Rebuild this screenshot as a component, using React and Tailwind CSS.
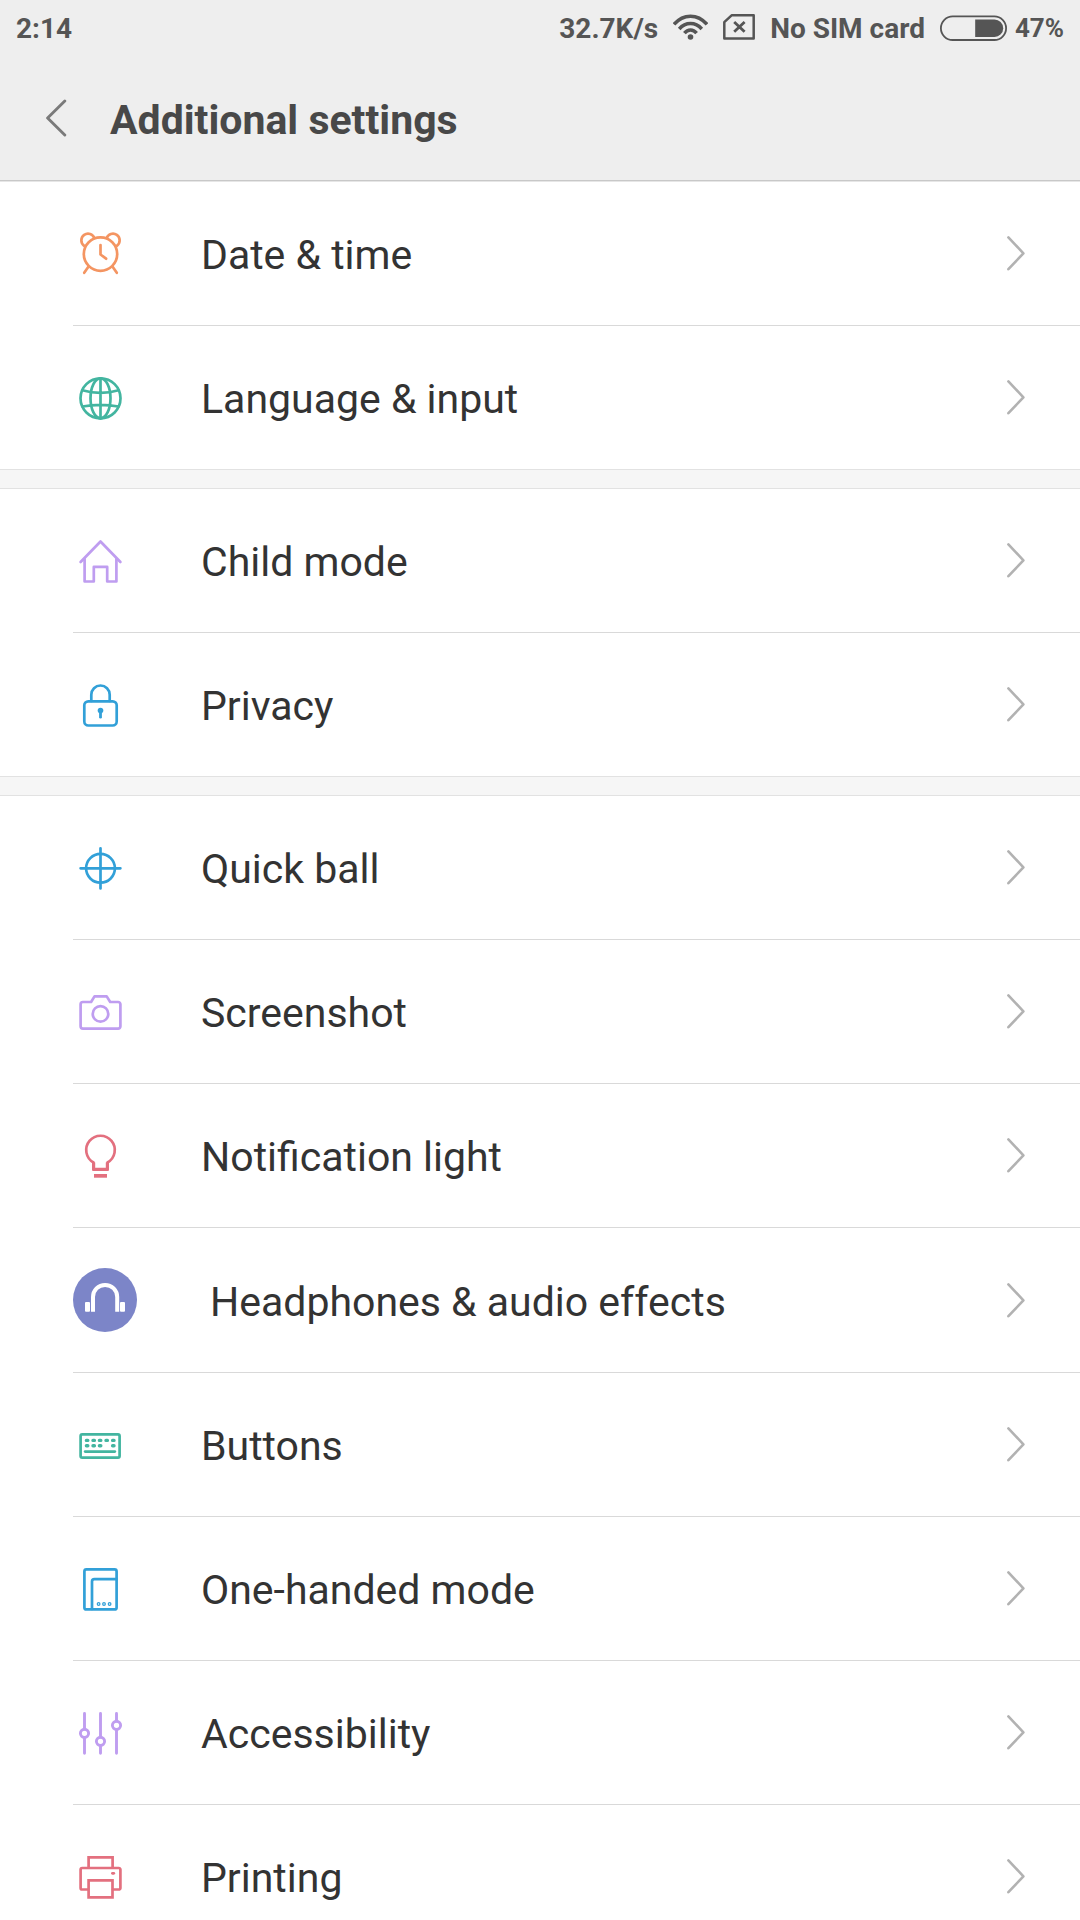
const groups = [
  [
    { label: 'Date & time', Icon: ClockIcon },
    { label: 'Language & input', Icon: GlobeIcon },
  ],
  [
    { label: 'Child mode', Icon: HomeIcon },
    { label: 'Privacy', Icon: LockIcon },
  ],
  [
    { label: 'Quick ball', Icon: TargetIcon },
    { label: 'Screenshot', Icon: CameraIcon },
    { label: 'Notification light', Icon: BulbIcon },
    { label: 'Headphones & audio effects', Icon: HeadphonesIcon },
    { label: 'Buttons', Icon: KeyboardIcon },
    { label: 'One-handed mode', Icon: OneHandedIcon },
    { label: 'Accessibility', Icon: SlidersIcon },
    { label: 'Printing', Icon: PrinterIcon },
  ],
];

export default function App() {
  return (
    <div className="flex flex-col h-screen overflow-hidden bg-white font-[Roboto,sans-serif]">
      <header className="flex-shrink-0 bg-[#eeeeee] border-b border-[#c8c8c8]">
        <StatusBar />
        <div className="flex items-center h-31 pl-[45px] gap-[43px]">
          <button type="button" aria-label="Back" className="flex-shrink-0">
            <svg width="22" height="38" viewBox="0 0 22 38" fill="none" stroke="#7a7a7a" strokeWidth="2.9" strokeLinecap="round" strokeLinejoin="round">
              <path d="M19.8 2 2.6 19l17.2 17" />
            </svg>
          </button>
          <h1 className="pt-[3px] text-[41px] leading-[60px] font-bold text-[#484848]">Additional settings</h1>
        </div>
      </header>

      <main className="flex-1 min-h-0 border-t border-[#e6e6e6] overflow-y-auto [scrollbar-width:none]">
        {groups.map((items, i) => (
          <section key={i}>
            {i > 0 && <div className="h-5 bg-[#f6f6f6] border-y border-[#e2e2e2]" />}
            <ul className="pl-[73px] divide-y divide-[#d9d9d9]">
              {items.map((item) => (
                <SettingRow key={item.label} {...item} />
              ))}
            </ul>
          </section>
        ))}
      </main>
    </div>
  );
}

function SettingRow({ label, Icon }) {
  return (
    <li>
      <a href="#" className="flex items-center gap-[73px] py-10 pr-[55px]">
        <Icon />
        <span className="flex-1 min-w-0 pt-[3px] text-[41px] leading-[60px] text-[#333333]">{label}</span>
        <svg className="flex-shrink-0" width="18" height="35" viewBox="0 0 18 35" fill="none" stroke="#b2b2b2" strokeWidth="2.6" strokeLinecap="round" strokeLinejoin="round">
          <path d="M1.4 1.4 16.4 17.3 1.4 33.2" />
        </svg>
      </a>
    </li>
  );
}

/* ── Status bar ── */
function StatusBar() {
  return (
    <div className="flex items-center justify-between h-14 px-4 text-[28px] font-bold text-[#555555]">
      <span className="pt-px">2:14</span>
      <div className="flex items-center gap-[15px]">
        <span className="pt-px">32.7K/s</span>
        <svg width="35" height="28" viewBox="0 0 35 28" fill="none" stroke="currentColor" strokeWidth="3.5">
          <path d="M1 10.4C10.2-.6 24.8-.6 34 10.4" />
          <path d="M6.2 15c6.4-7.2 16.2-7.2 22.6 0" />
          <path d="M11.4 19.2c3.4-4.2 8.8-4.2 12.2 0" />
          <circle cx="17.5" cy="23" r="2.8" fill="currentColor" stroke="none" />
        </svg>
        <svg width="32" height="28" viewBox="0 0 32 28" fill="none" stroke="currentColor" strokeWidth="2.5" strokeLinejoin="round">
          <path d="M8.6 1.3H30.7V24.6H1.3V8.2Z" />
          <path d="m11.2 8 10.4 9.8m0-9.8L11.2 17.8" strokeWidth="2.8" />
        </svg>
        <span className="pt-px">No SIM card</span>
        <div className="flex items-center gap-2">
          <svg width="67" height="26" viewBox="0 0 67 26">
            <rect x="0.9" y="1.4" width="65.2" height="23.6" rx="11.8" fill="none" stroke="currentColor" strokeWidth="1.8" />
            <path d="M35.2 4.5H54.5a8.7 8.7 0 0 1 0 17.4H35.2Z" fill="currentColor" />
          </svg>
          <span className="pt-px text-[26px]">47%</span>
        </div>
      </div>
    </div>
  );
}

/* ── Row icons ── */
function LineIcon({ color, children }) {
  return (
    <svg className="flex-shrink-0" width="55" height="55" viewBox="0 0 55 55" fill="none" stroke={color} strokeWidth="2.7" strokeLinecap="round" strokeLinejoin="round">
      {children}
    </svg>
  );
}

function ClockIcon() {
  return (
    <LineIcon color="#f49562">
      <circle cx="27.5" cy="28.1" r="16.7" />
      <path d="M27.5 19.1v9.4l5.6 4.2" />
      <path d="M10.9 19.6A6.7 6.7 0 1 1 21.4 12.2" />
      <path d="M44.1 19.6A6.7 6.7 0 1 0 33.6 12.2" />
      <path d="M15.2 41 11.2 46.8M39.8 41 43.8 46.8" />
    </LineIcon>
  );
}

function GlobeIcon() {
  return (
    <LineIcon color="#43b5a0">
      <circle cx="27.5" cy="28.3" r="20" />
      <ellipse cx="27.5" cy="28.3" rx="10" ry="20" />
      <path d="M27.5 8.3v40M9.3 20.3q18.2 5.2 36.4 0M9.3 36.5q18.2-3.4 36.4 0" />
    </LineIcon>
  );
}

function HomeIcon() {
  return (
    <LineIcon color="#bf9df0">
      <path d="M7.6 29 27.5 8.5 47.4 29" />
      <path d="M11.6 26v22.5h9.2V33.9h13.4v14.6h9.2V26" />
    </LineIcon>
  );
}

function LockIcon() {
  return (
    <LineIcon color="#32a0d8">
      <rect x="11.3" y="24.3" width="32.4" height="24.2" rx="4" />
      <path d="M18.3 24v-6.3a9.2 9.2 0 0 1 18.4 0V24" />
      <circle cx="27.5" cy="33.6" r="2.8" fill="#32a0d8" stroke="none" />
      <path d="M27.5 33.6v6.6" strokeWidth="2.8" />
    </LineIcon>
  );
}

function TargetIcon() {
  return (
    <LineIcon color="#32a0d8">
      <circle cx="27.5" cy="28.3" r="14.4" />
      <path d="M27.5 8.3v40.2M7.6 28.3h39.8" />
    </LineIcon>
  );
}

function CameraIcon() {
  return (
    <LineIcon color="#bf9df0">
      <path d="M9.9 18h8.2l3.4-5.6h12.2l3.5 5.6h7.9a2.3 2.3 0 0 1 2.3 2.3v22a2.3 2.3 0 0 1-2.3 2.3H9.9a2.3 2.3 0 0 1-2.3-2.3V20.3A2.3 2.3 0 0 1 9.9 18Z" />
      <circle cx="27.5" cy="29.9" r="7.8" />
    </LineIcon>
  );
}

function BulbIcon() {
  return (
    <LineIcon color="#e3707f">
      <path d="M20.5 41.4v-6.9A14.3 14.3 0 1 1 34.5 34.5v6.9Z" />
      <path d="M20.6 34.4v7h13.8v-7" strokeWidth="3.2" strokeLinecap="butt" />
      <rect x="21" y="46" width="13" height="3.7" fill="#e3707f" stroke="none" />
    </LineIcon>
  );
}

function HeadphonesIcon() {
  return (
    <svg className="flex-shrink-0" width="64" height="64" viewBox="0 0 64 64">
      <circle cx="32" cy="32" r="32" fill="#7c85c8" />
      <path d="M20 43.7V29a12.1 12.1 0 0 1 24.2 0v14.7" fill="none" stroke="#ffffff" strokeWidth="4" />
      <rect x="12" y="34" width="5" height="9.8" rx="1" fill="#ffffff" />
      <rect x="47" y="34" width="5" height="9.8" rx="1" fill="#ffffff" />
    </svg>
  );
}

function KeyboardIcon() {
  return (
    <LineIcon color="#43b5a0">
      <rect x="7.6" y="17.4" width="39" height="23.2" rx="1.6" />
      <path d="M13.4 23.4h1.4M20 23.4h1.4M26.4 23.4h1.4M33 23.4h1.4M39.6 23.4h1.4" strokeWidth="3.4" />
      <path d="M13.4 28.8h1.4M20 28.8h1.4M26.4 28.8h1.4M39.6 28.8h1.4" strokeWidth="3.4" />
      <path d="M12.2 34.6h29.6" strokeWidth="2.8" />
    </LineIcon>
  );
}

function OneHandedIcon() {
  return (
    <LineIcon color="#32a0d8">
      <rect x="11.4" y="8.4" width="32.2" height="40" rx="2" />
      <path d="M19 48V20.6a2.4 2.4 0 0 1 2.4-2.4H43.4" />
      <g strokeWidth="1.3">
        <circle cx="25.6" cy="43" r="1.3" />
        <circle cx="31" cy="43" r="1.3" />
        <circle cx="36.6" cy="43" r="1.3" />
      </g>
    </LineIcon>
  );
}

function SlidersIcon() {
  return (
    <LineIcon color="#bf9df0">
      <g strokeWidth="2.9">
        <path d="M11.5 8.4v15.7M11.5 32.5v15.7M27.5 8.4v23.7M27.5 40.5v7.7M43.5 8.4v7.7M43.5 24.5v23.7" />
        <circle cx="11.5" cy="28.3" r="4.1" />
        <circle cx="27.5" cy="36.3" r="4.1" />
        <circle cx="43.5" cy="20.3" r="4.1" />
      </g>
    </LineIcon>
  );
}

function PrinterIcon() {
  return (
    <LineIcon color="#e3707f">
      <g strokeLinejoin="miter">
        <path d="M15.6 18V8.4h24V18" strokeLinecap="butt" />
        <path d="M15 40.5H9.2A1.6 1.6 0 0 1 7.6 38.9V20.6A1.6 1.6 0 0 1 9.2 19h36.6a1.6 1.6 0 0 1 1.6 1.6v18.3a1.6 1.6 0 0 1-1.6 1.6H40" />
        <path d="M15.6 31.3h23.9v17.1H15.6Z" />
        <path d="M39.4 24.3h1.4" />
      </g>
    </LineIcon>
  );
}
